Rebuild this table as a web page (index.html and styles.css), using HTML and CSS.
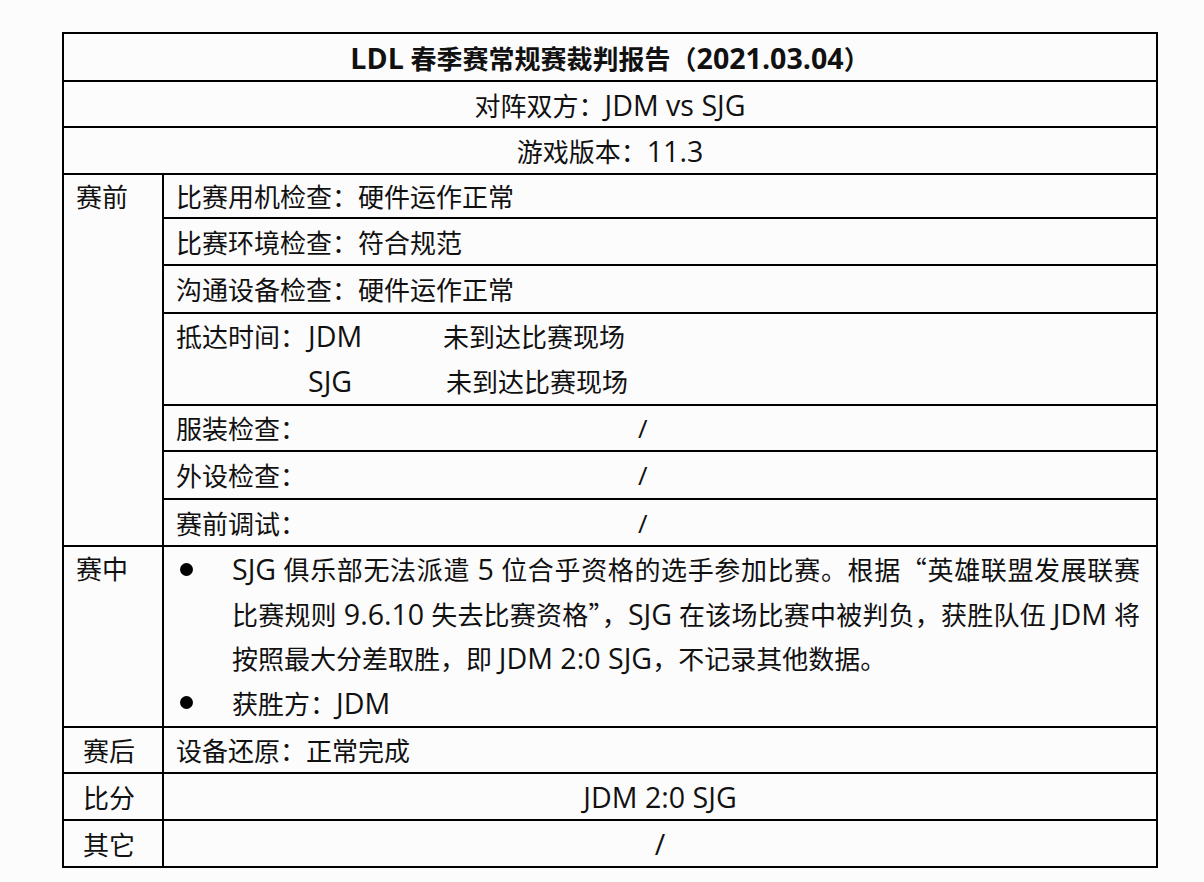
FILE: index.html
```html
<!DOCTYPE html>
<html lang="zh-CN">
<head>
<meta charset="utf-8">
<title>LDL 春季赛常规赛裁判报告</title>
<link rel="stylesheet" href="styles.css">
</head>
<body>
<div class="page">
  <div class="sheet">
    <div class="cell full title"><span><span class="en">LDL</span> 春季赛常规赛裁判报告（<span class="en">2021.03.04</span>）</span></div>
    <div class="cell full center"><span>对阵双方：<span class="en">JDM vs SJG</span></span></div>
    <div class="cell full center"><span>游戏版本：<span class="en">11.3</span></span></div>

    <div class="label top pre">赛前</div>
    <div class="cell">比赛用机检查：硬件运作正常</div>
    <div class="cell">比赛环境检查：符合规范</div>
    <div class="cell">沟通设备检查：硬件运作正常</div>
    <div class="cell arrive">
      <div class="arow"><span class="alab">抵达时间：</span><span class="team en">JDM</span><span class="st">未到达比赛现场</span></div>
      <div class="arow"><span class="alab"></span><span class="team en">SJG</span><span class="st st2">未到达比赛现场</span></div>
    </div>
    <div class="cell"><span class="slab">服装检查：</span><span>/</span></div>
    <div class="cell"><span class="slab">外设检查：</span><span>/</span></div>
    <div class="cell"><span class="slab">赛前调试：</span><span>/</span></div>

    <div class="label top mid">赛中</div>
    <div class="cell during">
      <div class="item">
        <span class="bul"><span class="dot"></span></span>
        <div class="itext">
          <div class="ln just"><span class="en">SJG</span> 俱乐部无法派遣 <span class="en">5</span> 位合乎资格的选手参加比赛。根据<span class="cjk">“</span>英雄联盟发展联赛</div>
          <div class="ln just">比赛规则 <span class="en">9.6.10</span> 失去比赛资格<span class="cjk">”</span>，<span class="en">SJG</span> 在该场比赛中被判负，获胜队伍 <span class="en">JDM</span> 将</div>
          <div class="ln">按照最大分差取胜，即 <span class="en">JDM 2:0 SJG</span>，不记录其他数据。</div>
        </div>
      </div>
      <div class="item">
        <span class="bul"><span class="dot"></span></span>
        <div class="itext">
          <div class="ln">获胜方：<span class="en">JDM</span></div>
        </div>
      </div>
    </div>

    <div class="label">赛后</div>
    <div class="cell">设备还原：正常完成</div>
    <div class="label">比分</div>
    <div class="cell center"><span class="en">JDM 2:0 SJG</span></div>
    <div class="label">其它</div>
    <div class="cell center"><span class="en">/</span></div>
  </div>
</div>
</body>
</html>
```

FILE: styles.css
```css
html, body {
  margin: 0;
  padding: 0;
  background: #fdfcfd;
}

body {
  font-family: "Open Sans", "Noto Sans CJK SC", sans-serif;
  font-size: 26px;
  color: #111;
}

.en {
  font-size: 28.6px;
}

.cjk {
  font-family: "Noto Sans CJK SC", sans-serif;
}

.page {
  padding: 32px 0 0 62px;
}

.sheet {
  width: 1094px;
  border-top: 2px solid #000;
  border-left: 2px solid #000;
  display: grid;
  grid-template-columns: 100px 994px;
  grid-template-rows: 48px 46px 47px 44px 47px 48px 92px 46px 48px 47px 181px 46px 47px 47px;
}

.cell, .label {
  box-sizing: border-box;
  border-right: 2px solid #000;
  border-bottom: 2px solid #000;
  display: flex;
  align-items: center;
  padding-left: 12px;
  white-space: nowrap;
}

.full {
  grid-column: 1 / 3;
  justify-content: center;
  padding-left: 0;
}

.center {
  justify-content: center;
  padding-left: 0;
}

.title {
  font-weight: 700;
}

.label {
  padding-left: 19px;
}

.label.top {
  align-items: flex-start;
  padding-left: 12px;
  line-height: 44px;
}

.pre {
  grid-row: 4 / span 7;
}

.arrive {
  flex-direction: column;
  align-items: stretch;
  justify-content: center;
}

.arow {
  display: flex;
  align-items: baseline;
  line-height: 44px;
}

.alab {
  width: 132px;
}

.team {
  width: 135px;
}

.st2 {
  padding-left: 3px;
}

.slab {
  width: 462px;
}

.during {
  flex-direction: column;
  align-items: stretch;
  justify-content: flex-start;
  padding: 0 16px 0 16px;
  white-space: normal;
}

.item {
  display: grid;
  grid-template-columns: 52px 1fr;
}

.bul {
  height: 44.5px;
  display: flex;
  align-items: center;
}

.dot {
  width: 13px;
  height: 13px;
  border-radius: 50%;
  background: #000;
}

.ln {
  line-height: 44.5px;
  height: 44.5px;
  white-space: nowrap;
}

.just {
  text-align: justify;
  text-align-last: justify;
}
```
